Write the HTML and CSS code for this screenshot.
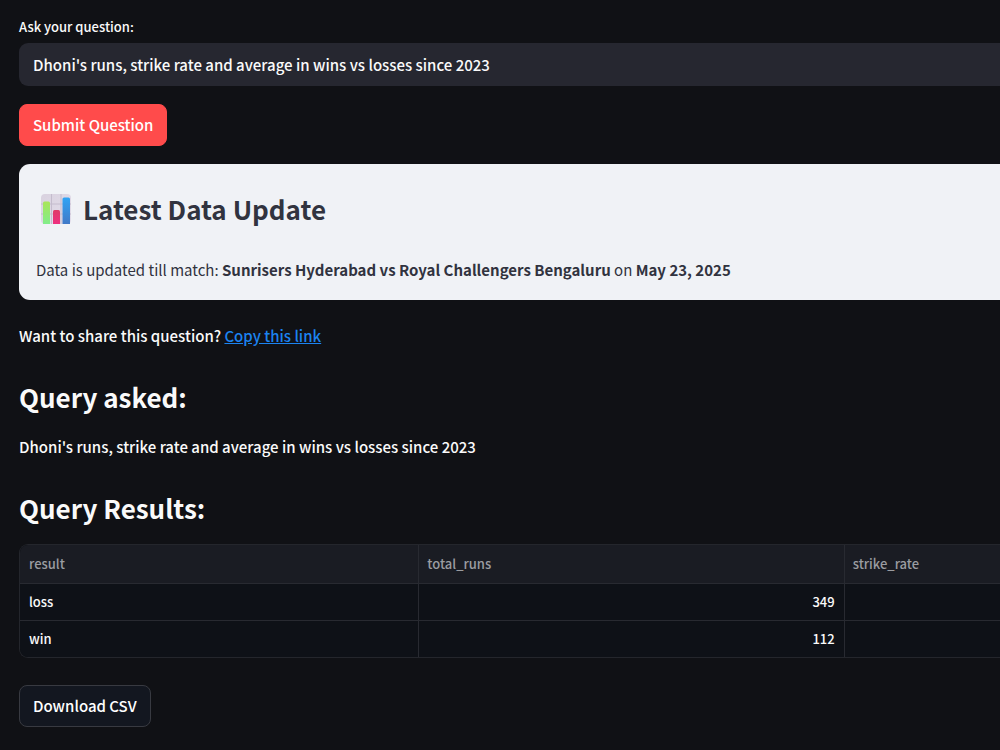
FILE: index.html
```html
<!DOCTYPE html>
<html lang="en">
<head>
<meta charset="utf-8">
<meta name="viewport" content="width=device-width, initial-scale=1">
<title>Cricket Query</title>
<link rel="stylesheet" href="styles.css">
</head>
<body>
<main class="page">
  <form class="ask">
    <label class="ask-label" for="question">Ask your question:</label>
    <input class="ask-input" id="question" type="text" value="Dhoni's runs, strike rate and average in wins vs losses since 2023">
    <button class="button primary" type="button">Submit Question</button>
  </form>

  <section class="card">
    <h2 class="card-title">
      <svg class="chart-icon" viewBox="0 0 32 32" aria-hidden="true">
        <defs>
          <linearGradient id="paper" x1="0" y1="0" x2="1" y2="1"><stop offset="0" stop-color="#d9d2df"/><stop offset="1" stop-color="#e3deeb"/></linearGradient>
          <linearGradient id="green" x1="0" y1="0" x2="0" y2="1"><stop offset="0" stop-color="#a9e558"/><stop offset="1" stop-color="#82ed8b"/></linearGradient>
          <linearGradient id="pink" x1="0" y1="0" x2="0" y2="1"><stop offset="0" stop-color="#de3a68"/><stop offset="1" stop-color="#ef2f80"/></linearGradient>
          <linearGradient id="blue" x1="0" y1="0" x2="0" y2="1"><stop offset="0" stop-color="#2fa4f5"/><stop offset="1" stop-color="#4179c7"/></linearGradient>
        </defs>
        <rect x="1" y="1" width="30" height="30" rx="4" fill="url(#paper)"/>
        <path d="M11.500 1v30M21 1v30M1 11h30M1 21h30" stroke="#c4bccd" stroke-width="1" fill="none"/>
        <path d="M3 31V10a1.500 1.500 0 0 1 1.500-1.500h4A1.500 1.500 0 0 1 10 10v21z" fill="url(#green)"/>
        <path d="M13 31V18.500a1.500 1.500 0 0 1 1.500-1.500h4a1.500 1.500 0 0 1 1.500 1.500V31z" fill="url(#pink)"/>
        <path d="M22.500 31V6a1.500 1.500 0 0 1 1.500-1.500h4.500A1.500 1.500 0 0 1 30 6v25z" fill="url(#blue)"/>
      </svg>
      Latest Data Update
    </h2>
    <p class="card-text">Data is updated till match: <strong>Sunrisers Hyderabad vs Royal Challengers Bengaluru</strong> on <strong>May 23, 2025</strong></p>
  </section>

  <p class="share">Want to share this question? <a class="link" href="#">Copy this link</a></p>

  <h2 class="heading">Query asked:</h2>
  <p class="query">Dhoni's runs, strike rate and average in wins vs losses since 2023</p>

  <h2 class="heading">Query Results:</h2>
  <div class="table-frame">
    <table class="results">
      <thead>
        <tr><th class="col-result" scope="col">result</th><th class="col-runs" scope="col">total_runs</th><th scope="col">strike_rate</th></tr>
      </thead>
      <tbody>
        <tr><td>loss</td><td class="number">349</td><td></td></tr>
        <tr><td>win</td><td class="number">112</td><td></td></tr>
      </tbody>
    </table>
  </div>
  <button class="button secondary" type="button">Download CSV</button>
</main>
</body>
</html>
```
FILE: styles.css
```css
* { box-sizing: border-box; }

body {
  margin: 0;
  background: #101115;
  color: #fafafa;
  font-family: "Noto Sans CJK SC", "Noto Sans", sans-serif;
  font-size: 15px;
  font-weight: 500;
  line-height: 24px;
}

h2, p { margin: 0; }

.page {
  display: flex;
  flex-direction: column;
  align-items: stretch;
  padding: 17px 0 23px 19px;
}

.ask {
  display: flex;
  flex-direction: column;
}

.ask-label {
  align-self: flex-start;
  font-size: 13px;
  line-height: 20px;
}

.ask-input {
  height: 43px;
  margin: 6px 0 18px;
  padding: 0 14px 1px;
  border: 0;
  border-radius: 9px 0 0 9px;
  background: #262730;
  color: #fafafa;
  font: inherit;
}

.button {
  align-self: flex-start;
  height: 42px;
  padding: 0 13px;
  border: 1px solid;
  border-radius: 8px;
  color: #fff;
  font: inherit;
}

.primary {
  border-color: #ff4b4b;
  background: #ff4b4b;
}

.secondary {
  margin-top: 27px;
  border-color: #383a41;
  background: #131720;
}

.card {
  display: flex;
  flex-direction: column;
  gap: 31px;
  margin-top: 18px;
  padding: 27px 17px 18px;
  border-radius: 11px 0 0 11px;
  background: #f0f2f6;
  color: #31333f;
  font-weight: 400;
}

.card-title,
.heading {
  font-size: 26px;
  font-weight: 700;
  line-height: 36px;
}

.card-title {
  display: flex;
  align-items: center;
  gap: 11px;
  padding-left: 4px;
}

.chart-icon {
  width: 32px;
  height: 32px;
}

.card strong { font-weight: 700; }

.share { margin-top: 24px; }
.link { color: #1c83f0; }
.heading { margin-top: 31px; }
.query { margin-top: 20px; }

.table-frame {
  margin-top: 18px;
  overflow: hidden;
  border: 1px solid #24262c;
  border-right: 0;
  border-radius: 9px 0 0 9px;
}

.results {
  width: 100%;
  border-collapse: collapse;
  table-layout: fixed;
  background: #0e1117;
  font-size: 13px;
}

.results th,
.results td {
  height: 37px;
  padding: 0 9px;
  border-right: 1px solid #282a31;
  border-bottom: 1px solid #282a31;
}

.results th {
  height: 38px;
  padding: 0 8px;
  background: #1a1c23;
  color: #9b9ca1;
  font-weight: 500;
  text-align: left;
}

.results th:first-child { padding-left: 9px; }
.results th:last-child,
.results td:last-child { border-right: 0; }
.results tbody tr:last-child td { border-bottom: 0; }
.results .number { text-align: right; }
.col-result { width: 40.700%; }
.col-runs { width: 43.400%; }
```
